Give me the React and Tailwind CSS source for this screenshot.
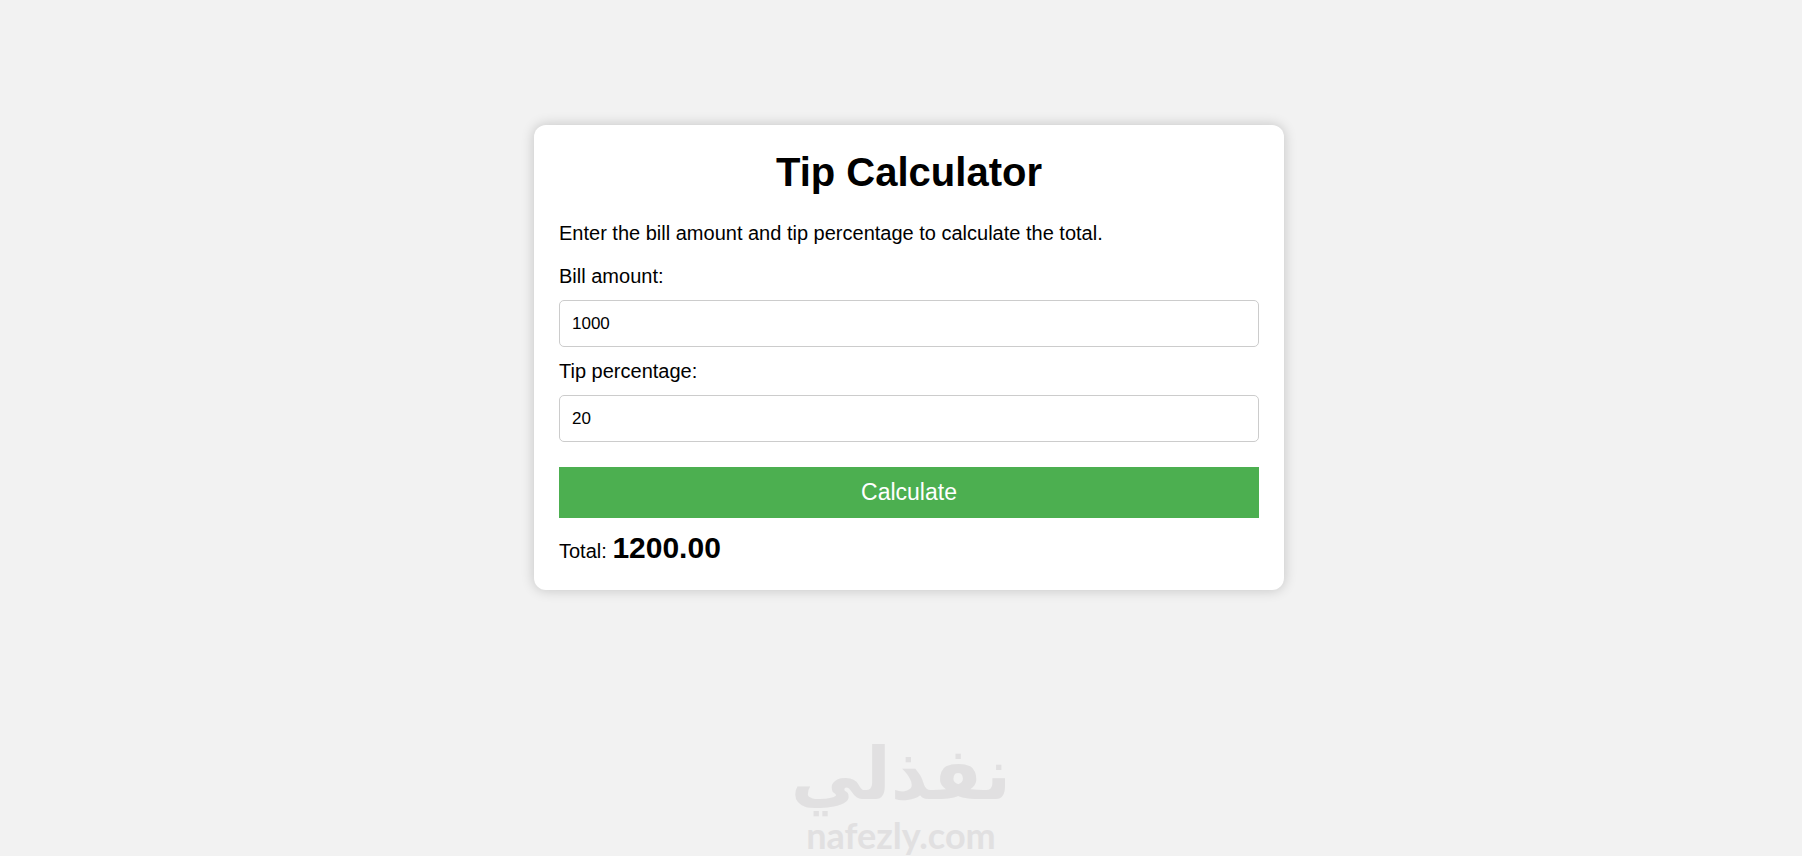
import { useState } from "react";

function Field({ id, label, value, onChange }) {
  return (
    <div className="flex flex-col gap-3">
      <label htmlFor={id} className="leading-[23px]">
        {label}
      </label>
      <input
        id={id}
        type="text"
        inputMode="decimal"
        value={value}
        onChange={(e) => onChange(e.target.value)}
        className="h-[47px] w-full rounded-[5px] border border-[#cccccc] bg-white px-3 text-[17px] text-black"
      />
    </div>
  );
}

export default function App() {
  const [bill, setBill] = useState("1000");
  const [tip, setTip] = useState("20");
  const [total, setTotal] = useState("1200.00");

  function calculate(e) {
    e.preventDefault();
    const sum = Number(bill) * (1 + Number(tip) / 100);
    setTotal(Number.isFinite(sum) ? sum.toFixed(2) : "0.00");
  }

  return (
    <div className="flex min-h-screen flex-col items-center bg-[#f2f2f2] font-['Liberation_Sans',Arial,sans-serif] text-xl text-black">
      <main className="mt-[125px] flex w-full justify-center pl-4">
        <form
          onSubmit={calculate}
          className="w-full max-w-[750px] rounded-xl bg-white p-[25px] shadow-[0_0_13px_rgba(0,0,0,0.2)]"
        >
          <h1 className="text-center text-[40px] leading-[44px] font-bold">Tip Calculator</h1>
          <p className="mt-7 leading-[23px]">
            Enter the bill amount and tip percentage to calculate the total.
          </p>
          <div className="mt-5 flex flex-col gap-[13px]">
            <Field id="bill" label="Bill amount:" value={bill} onChange={setBill} />
            <Field id="tip" label="Tip percentage:" value={tip} onChange={setTip} />
          </div>
          <button
            type="submit"
            className="mt-[25px] h-[51px] w-full cursor-pointer bg-[#4caf50] text-[23px] text-white"
          >
            Calculate
          </button>
          <p className="mt-[13px] leading-[23px]">
            Total:{" "}
            <output htmlFor="bill tip" className="text-[30px] leading-[34px] font-bold">
              {total}
            </output>
          </p>
        </form>
      </main>
      <footer className="mt-auto flex flex-col items-center text-[#e1e0e1]">
        <span
          lang="ar"
          dir="rtl"
          className="font-['DejaVu_Sans',sans-serif] text-[72px] leading-[80px] font-bold"
        >
          نفذلي
        </span>
        <span className="font-['Lato',sans-serif] text-[36px] leading-[42px] font-bold">
          nafezly.com
        </span>
      </footer>
    </div>
  );
}
